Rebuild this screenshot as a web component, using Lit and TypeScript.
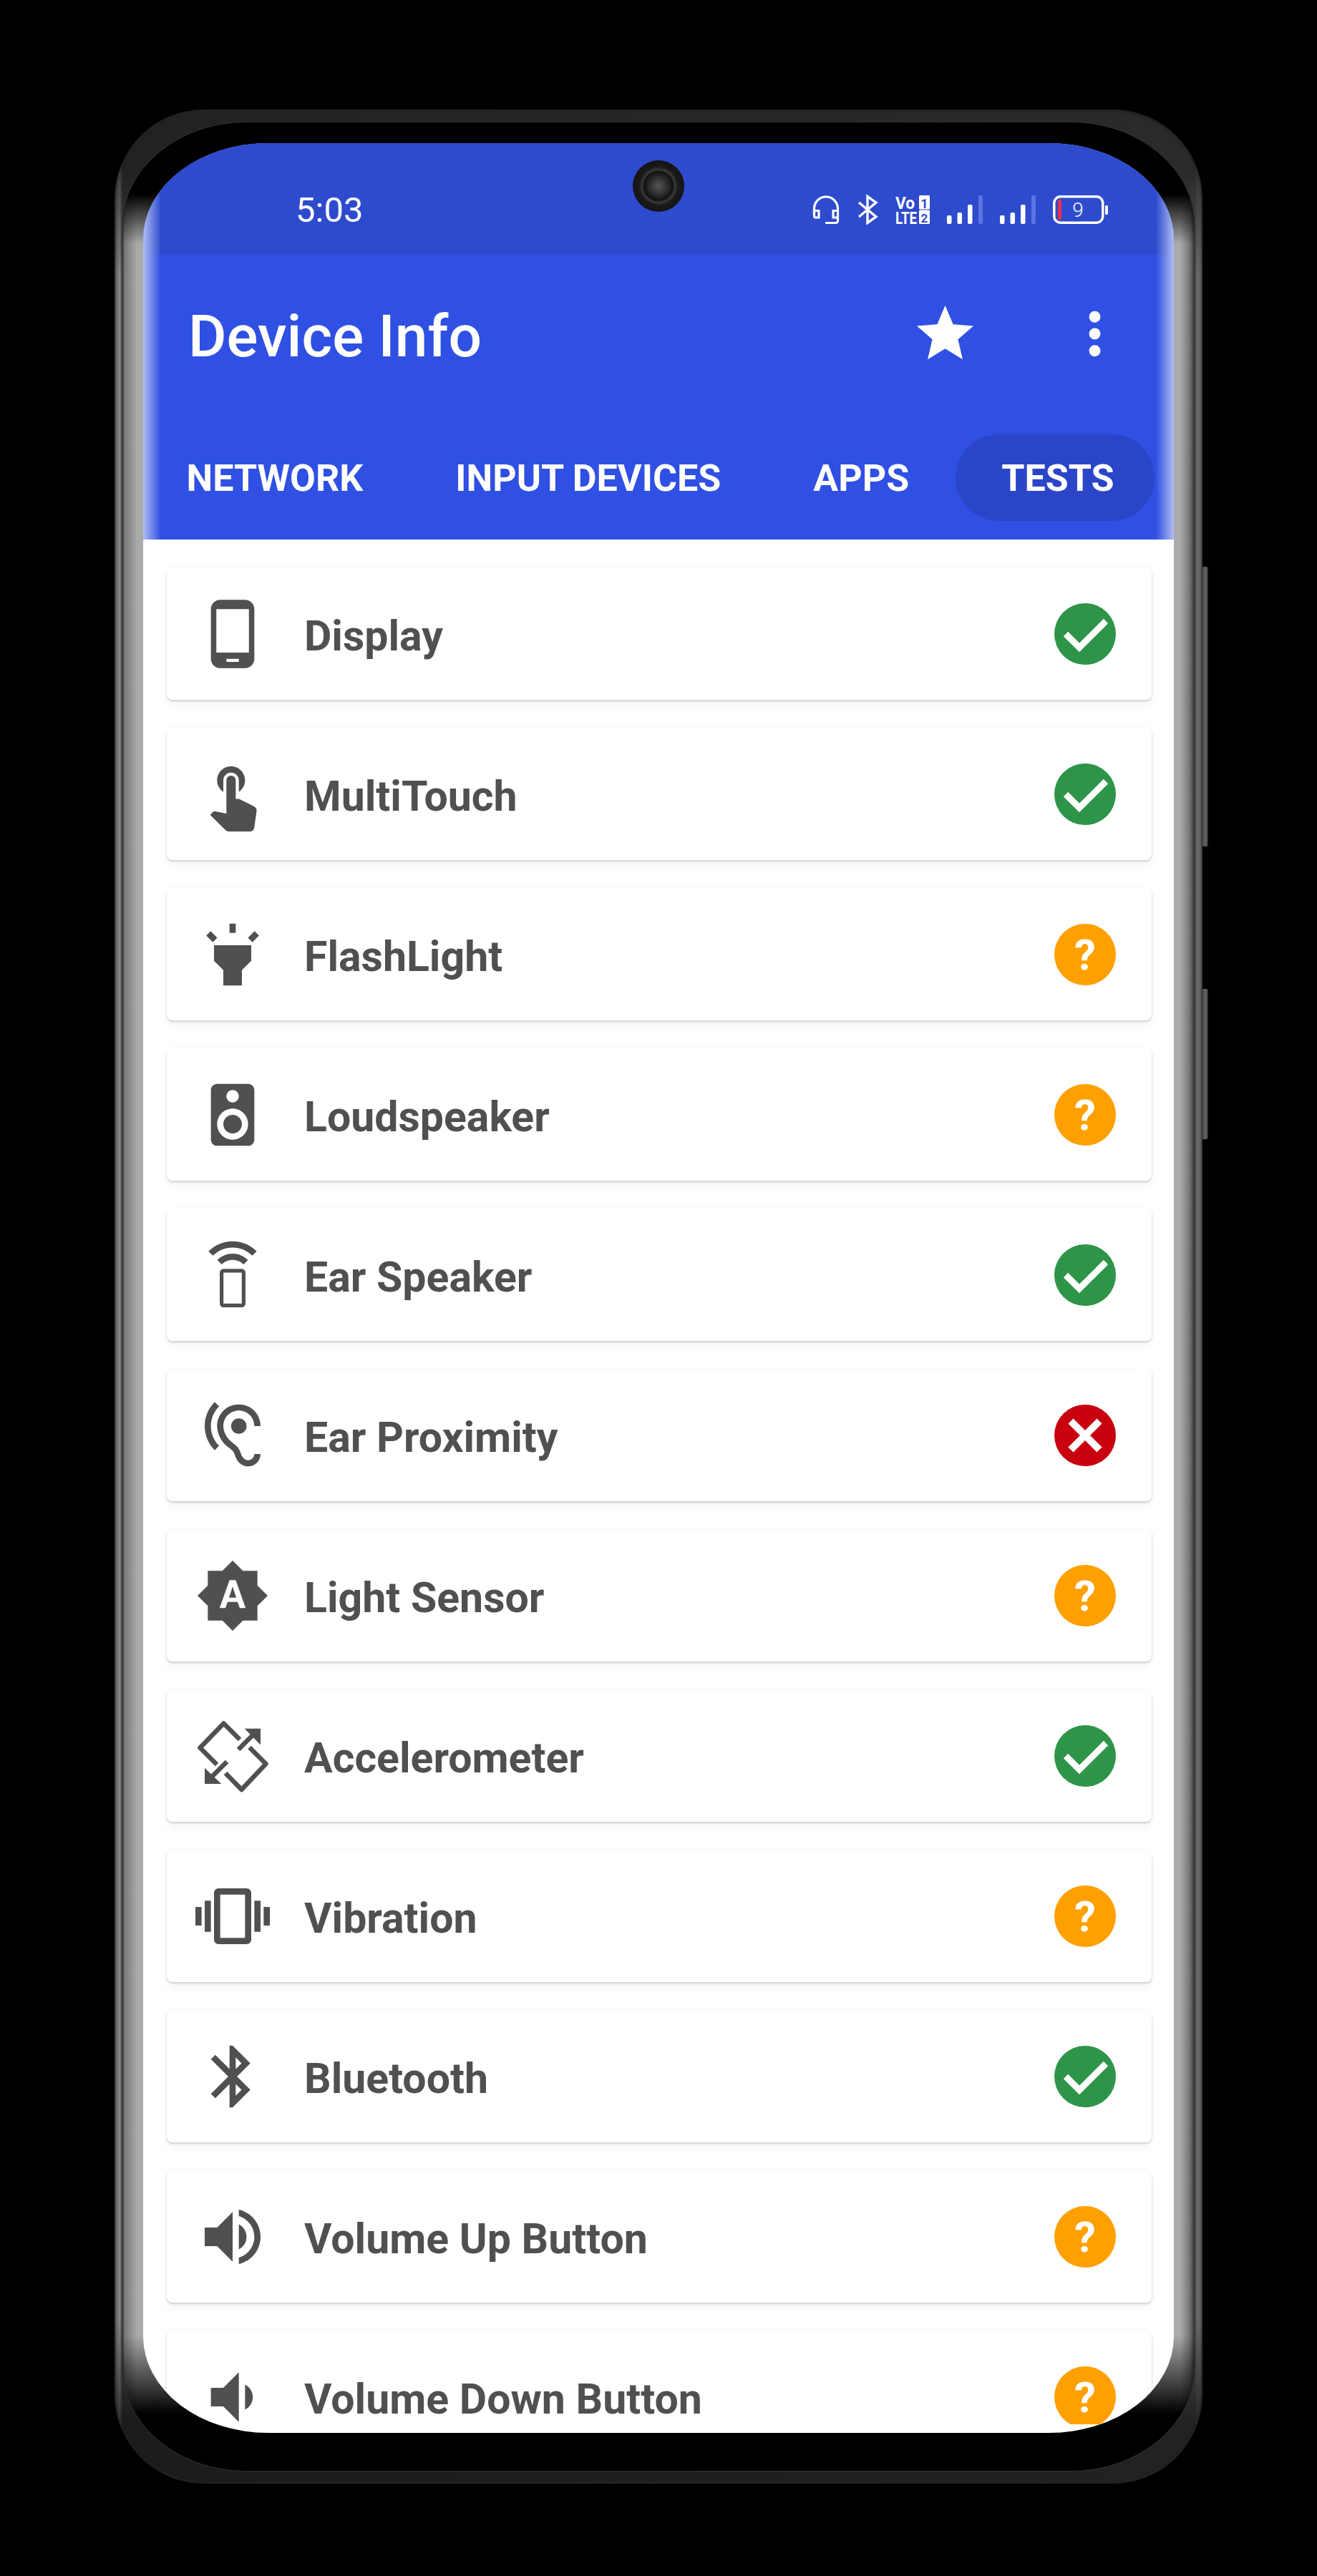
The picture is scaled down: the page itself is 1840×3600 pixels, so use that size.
import { LitElement, css, html, svg } from 'lit';
import { customElement } from 'lit/decorators.js';

type Status = 'ok' | 'fail' | 'unknown';

interface TestRow {
  label: string;
  icon: unknown;
  status: Status;
}

const ICONS = {
  display: svg`<path d="M16 1H8C6.34 1 5 2.34 5 4v16c0 1.66 1.34 3 3 3h8c1.66 0 3-1.34 3-3V4c0-1.66-1.34-3-3-3zm-2 20h-4v-1h4v1zm3.25-3H6.75V4h10.5v14z"/>`,
  touch: svg`<path d="M9 11.24V7.5C9 6.12 10.12 5 11.5 5S14 6.12 14 7.5v3.74c1.21-.81 2-2.18 2-3.74C16 5.01 13.99 3 11.5 3S7 5.01 7 7.5c0 1.56.79 2.93 2 3.74zm9.84 4.63l-4.54-2.26c-.17-.07-.35-.11-.54-.11H13v-6c0-.83-.67-1.5-1.5-1.5S10 6.67 10 7.5v10.74l-3.43-.72c-.08-.01-.15-.03-.24-.03-.31 0-.59.13-.79.33l-.79.8 4.94 4.94c.27.27.65.44 1.06.44h6.79c.75 0 1.33-.55 1.44-1.28l.75-5.27c.01-.07.02-.14.02-.2 0-.62-.38-1.16-.91-1.38z"/>`,
  flash: svg`<path d="M6 14l3 3v5h6v-5l3-3V9H6zm5-12h2v3h-2zM3.5 5.875L4.914 4.46l2.12 2.122L5.62 7.997zm13.46.71l2.123-2.12 1.414 1.414L18.375 8z"/>`,
  speaker: svg`<path d="M17 2H7c-1.1 0-2 .9-2 2v16c0 1.1.89 1.99 2 1.99L17 22c1.1 0 2-.9 2-2V4c0-1.1-.9-2-2-2zm-5 2c1.1 0 2 .9 2 2s-.9 2-2 2c-1.11 0-2-.9-2-2s.89-2 2-2zm0 16c-2.76 0-5-2.24-5-5s2.24-5 5-5 5 2.24 5 5-2.24 5-5 5zm0-8c-1.66 0-3 1.34-3 3s1.34 3 3 3 3-1.34 3-3-1.34-3-3-3z"/>`,
  earSpeaker: svg`<g transform="translate(0 1.1)"><path d="M7.05 6.05l1.41 1.41C9.37 6.56 10.62 6 12 6s2.63.56 3.54 1.46l1.41-1.41C15.68 4.78 13.93 4 12 4s-3.68.78-4.95 2.05zM12 0C8.96 0 6.21 1.23 4.22 3.22l1.41 1.41C7.26 3.01 9.51 2 12 2s4.74 1.01 6.36 2.64l1.41-1.41C17.79 1.23 15.04 0 12 0z"/></g>
    <rect x="8.45" y="10.6" width="7.1" height="11.2" rx="0.6" fill="none" stroke="#505050" stroke-width="1.2"/>`,
  hearing: svg`<path d="M17 20c-.29 0-.56-.06-.76-.15-.71-.37-1.21-.88-1.71-2.38-.51-1.56-1.47-2.29-2.39-3-.79-.61-1.61-1.24-2.32-2.53C9.29 10.98 9 9.93 9 9c0-2.8 2.2-5 5-5s5 2.2 5 5h2c0-3.93-3.07-7-7-7S7 5.07 7 9c0 1.26.38 2.65 1.07 3.9.91 1.65 1.98 2.48 2.85 3.15.81.62 1.39 1.07 1.71 2.05.6 1.82 1.37 2.84 2.73 3.55.51.23 1.07.35 1.64.35 2.21 0 4-1.79 4-4h-2c0 1.1-.9 2-2 2zM7.64 2.64L6.22 1.22C4.23 3.21 3 5.96 3 9s1.23 5.79 3.22 7.78l1.41-1.41C6.01 13.74 5 11.49 5 9s1.01-4.74 2.64-6.36zM11.5 9c0 1.38 1.12 2.5 2.5 2.5s2.5-1.12 2.5-2.5-1.12-2.5-2.5-2.5-2.5 1.12-2.5 2.5z"/>`,
  brightness: svg`<path d="M10.85 12.65h2.3L12 9l-1.15 3.65zM20 8.69V4h-4.69L12 .69 8.69 4H4v4.69L.69 12 4 15.31V20h4.69L12 23.31 15.31 20H20v-4.69L23.31 12 20 8.69zM14.3 16l-.7-2h-3.2l-.7 2H7.8L11 7h2l3.2 9h-1.9z"/>`,
  rotate: svg`<g transform="scale(.2308) translate(-8 -8)">
      <path d="M70 37L47.5 14.5L14.5 48.5L38 72M83.5 48L106.5 71L72.5 107L50 84M68 51L90 29M52 68L30 90" fill="none" stroke="#505050" stroke-width="6.5" stroke-linejoin="round"/>
      <path d="M76.7 21.8H99V44.5zM21 76.7V99H44.3z"/>
    </g>`,
  vibration: svg`<path d="M0 15h2V9H0v6zm3 2h2V7H3v10zm19-8v6h2V9h-2zm-3 8h2V7h-2v10zM16.5 3h-9C6.67 3 6 3.67 6 4.5v15c0 .83.67 1.5 1.5 1.5h9c.83 0 1.5-.67 1.5-1.5v-15c0-.83-.67-1.5-1.5-1.5zM16 19H8V5h8v14z"/>`,
  bluetooth: svg`<path d="M17.71 7.71L12 2h-1v7.59L6.41 5 5 6.41 10.59 12 5 17.59 6.41 19 11 14.41V22h1l5.71-5.71-4.3-4.29 4.3-4.29zM13 5.83l1.88 1.88L13 9.59V5.83zm1.88 10.46L13 18.17v-3.76l1.88 1.88z"/>`,
  volumeUp: svg`<path d="M3 9v6h4l5 5V4L7 9H3zm13.5 3c0-1.77-1.02-3.29-2.5-4.03v8.05c1.48-.73 2.5-2.25 2.5-4.02zM14 3.23v2.06c2.89.86 5 3.54 5 6.71s-2.11 5.85-5 6.71v2.06c4.01-.91 7-4.49 7-8.77s-2.99-7.86-7-8.77z"/>`,
  volumeDown: svg`<path d="M18.5 12c0-1.77-1.02-3.29-2.5-4.03v8.05c1.48-.73 2.5-2.25 2.5-4.02zM5 9v6h4l5 5V4L9 9H5z"/>`,
};

const ROWS: TestRow[] = [
  { label: 'Display', icon: ICONS.display, status: 'ok' },
  { label: 'MultiTouch', icon: ICONS.touch, status: 'ok' },
  { label: 'FlashLight', icon: ICONS.flash, status: 'unknown' },
  { label: 'Loudspeaker', icon: ICONS.speaker, status: 'unknown' },
  { label: 'Ear Speaker', icon: ICONS.earSpeaker, status: 'ok' },
  { label: 'Ear Proximity', icon: ICONS.hearing, status: 'fail' },
  { label: 'Light Sensor', icon: ICONS.brightness, status: 'unknown' },
  { label: 'Accelerometer', icon: ICONS.rotate, status: 'ok' },
  { label: 'Vibration', icon: ICONS.vibration, status: 'unknown' },
  { label: 'Bluetooth', icon: ICONS.bluetooth, status: 'ok' },
  { label: 'Volume Up Button', icon: ICONS.volumeUp, status: 'unknown' },
  { label: 'Volume Down Button', icon: ICONS.volumeDown, status: 'unknown' },
];

const TABS = ['NETWORK', 'INPUT DEVICES', 'APPS', 'TESTS'];

@customElement('app-root')
export class AppRoot extends LitElement {
  static styles = css`
    :host {
      display: block;
      width: 1840px;
      height: 3600px;
      overflow: hidden;
      background: #000;
      font-family: Roboto, 'Liberation Sans', sans-serif;
    }
    .device {
      display: flex;
      padding: 153px 0 0 160px;
    }
    .frame {
      width: 1520px;
      height: 3318px;
      box-sizing: border-box;
      padding: 18px 11px;
      border-radius: 125px;
      background:
        linear-gradient(180deg, rgba(0, 0, 0, 0.5) 0, rgba(0, 0, 0, 0.5) 90px, transparent 230px, transparent calc(100% - 230px), rgba(0, 0, 0, 0.6) calc(100% - 90px)),
        linear-gradient(90deg, #555 0, #888 7px, #444 11px, #555 calc(100% - 11px), #6a6a6a calc(100% - 6px), #555 100%);
      box-shadow: inset 0 3px 3px #222, inset 0 -3px 3px #222;
    }
    .bezel {
      height: 100%;
      box-sizing: border-box;
      padding: 29px 29px 53px;
      border-radius: 173px / 145px;
      box-shadow: 0 0 0 1px #333;
      background:
        linear-gradient(180deg, #000 0, #000 100px, transparent 170px, transparent calc(100% - 190px), #000 calc(100% - 80px)),
        linear-gradient(90deg, #333 0, #777 3px, #aaa 20px, #aaa calc(100% - 20px), #777 calc(100% - 7px), #333 100%);
    }
    .screen {
      position: relative;
      height: 3200px;
      overflow: hidden;
      background: #fff;
      border-radius: 175px / 135px;
    }
    .side-keys {
      display: flex;
      flex-direction: column;
      gap: 199px;
      padding-top: 639px;
    }
    .key {
      width: 8px;
      border-radius: 0 3px 3px 0;
      background: linear-gradient(90deg, #444, #6a6a6a 60%, #222);
    }
    .key.long {
      height: 391px;
    }
    .key.short {
      height: 210px;
    }
    .header {
      background:
        linear-gradient(90deg, #b0bdf3 0, rgba(176, 189, 243, 0) 25px, rgba(176, 189, 243, 0) calc(100% - 25px), #b0bdf3 100%),
        #2f50e2;
      color: #fff;
    }
    .status-bar {
      display: flex;
      align-items: center;
      height: 156px;
      padding: 30px 91px 0 213px;
      box-sizing: border-box;
      background:
        linear-gradient(90deg, #b0bdf3 0, rgba(176, 189, 243, 0) 25px, rgba(176, 189, 243, 0) calc(100% - 25px), #b0bdf3 100%),
        #2e4bce;
    }
    .time {
      font-size: 49px;
      font-weight: 400;
      line-height: 1;
    }
    .camera {
      position: absolute;
      top: 24px;
      left: 50%;
      width: 72px;
      height: 72px;
      margin-left: -36px;
      border-radius: 50%;
      background: radial-gradient(circle at 50% 50%, #555 0, #222 16px, #111 20px, #3a3a3a 23px, #1a1a1a 27px, #0a0a0a 100%);
    }
    .status-icons {
      display: flex;
      align-items: center;
      gap: 24px;
      margin-left: auto;
    }
    .status-icons svg {
      display: block;
      height: 40px;
      overflow: visible;
    }
    .toolbar {
      display: flex;
      align-items: center;
      gap: 114px;
      height: 224px;
      padding: 0 63px 0 63px;
      box-sizing: border-box;
    }
    .title {
      flex: 1;
      padding-top: 3px;
      font-size: 82px;
      font-weight: 500;
      line-height: 1;
    }
    .toolbar svg {
      display: block;
      width: 95px;
      height: 95px;
      fill: #fff;
      margin-bottom: 4px;
    }
    .tabs {
      display: flex;
      align-items: center;
      height: 174px;
      margin-left: -4px;
    }
    .tab {
      display: flex;
      align-items: center;
      height: 121px;
      padding: 2px 64.5px 0;
      box-sizing: border-box;
      font-size: 52px;
      font-weight: 700;
      border-radius: 60px;
      white-space: nowrap;
    }
    .tab.active {
      padding-right: 56px;
      background: #2b45c9;
    }
    .list {
      display: flex;
      flex-direction: column;
      gap: 39px;
      height: 2634px;
      box-sizing: border-box;
      overflow: hidden;
      padding: 39px 31px 0 33px;
    }
    .card {
      display: flex;
      flex: none;
      align-items: center;
      height: 185px;
      padding: 0 50px 0 40px;
      box-sizing: border-box;
      border-radius: 8px;
      background: #fff;
      box-shadow: 0 2px 3px rgba(0, 0, 0, 0.16), 0 8px 14px rgba(0, 0, 0, 0.04), 0 -1px 5px rgba(0, 0, 0, 0.03);
    }
    .icon {
      display: block;
      flex: none;
      width: 104px;
      height: 104px;
      fill: #505050;
    }
    .label {
      flex: 1;
      padding: 8px 0 0 48px;
      font-size: 59px;
      font-weight: 700;
      line-height: 1.2;
      color: #505050;
    }
    .badge {
      display: block;
      flex: none;
      width: 86px;
      height: 86px;
    }
    .badge text {
      font-family: Roboto, 'Liberation Sans', sans-serif;
      font-size: 60px;
      font-weight: 700;
      fill: #fff;
    }
  `;

  private _signal() {
    return html`<svg width="50" viewBox="0 0 50 40">
      <rect x="0" y="28" width="6.5" height="12" rx="2" fill="#fff" />
      <rect x="14.5" y="24" width="6.5" height="16" rx="2" fill="#fff" />
      <rect x="29" y="13" width="6.5" height="27" rx="2" fill="#fff" />
      <rect x="44" y="0" width="6" height="40" rx="2" fill="#5a74e0" />
    </svg>`;
  }

  private _statusIcons() {
    return html`<div class="status-icons">
      <svg width="38" viewBox="0 0 38 40" fill="none" stroke="#fff" stroke-width="3.2">
        <path d="M2.5 27V19A16.5 17 0 0 1 35.5 19V35A3 3 0 0 1 32.5 38.5H18" />
        <path d="M2.5 21.5H9V31H4.5A2 2 0 0 1 2.5 29zM35.5 21.5H29V31H35.5" />
      </svg>
      <svg width="30" viewBox="0 0 30 40" fill="none" stroke="#fff" stroke-width="3.4">
        <path d="M3 10L27 30L15 38.5V1.5L27 10L3 30" />
      </svg>
      <svg width="48" viewBox="0 0 48 40" font-family="Roboto, sans-serif" font-weight="700" font-size="24">
        <text fill="#fff">
          <tspan x="0" y="19" textLength="27" lengthAdjust="spacingAndGlyphs">Vo</tspan>
          <tspan x="0" y="39.5" textLength="30" lengthAdjust="spacingAndGlyphs">LTE</tspan>
        </text>
        <rect x="33" y="0" width="15" height="19.5" rx="1.5" fill="#fff" />
        <rect x="33" y="20.5" width="15" height="19.5" rx="1.5" fill="#fff" />
        <text x="40.5" y="17.5" font-size="18" text-anchor="middle" fill="#2e4bce">1</text>
        <text x="40.5" y="37.5" font-size="17" text-anchor="middle" fill="#2e4bce">2</text>
      </svg>
      ${this._signal()} ${this._signal()}
      <svg width="78" viewBox="0 0 78 40">
        <rect x="1.75" y="1.75" width="68" height="36.5" rx="9" fill="none" stroke="#fff" stroke-width="3.5" />
        <rect x="7" y="6" width="5" height="28" fill="#e8304a" />
        <rect x="73" y="14" width="4" height="13" rx="1.5" fill="#fff" />
        <text x="35" y="30" font-family="Roboto, sans-serif" font-size="28" font-weight="300" text-anchor="middle" fill="#fff">9</text>
      </svg>
    </div>`;
  }

  private _badge(status: Status) {
    if (status === 'ok') {
      return html`<svg class="badge" viewBox="0 0 86 86">
        <circle cx="43" cy="43" r="43" fill="#2e9448" />
        <path d="M16 43L35 62L72 25" fill="none" stroke="#fff" stroke-width="9" />
      </svg>`;
    }
    if (status === 'fail') {
      return html`<svg class="badge" viewBox="0 0 86 86">
        <circle cx="43" cy="43" r="43" fill="#c8000f" />
        <path d="M23 23L63 63M63 23L23 63" fill="none" stroke="#fff" stroke-width="10" />
      </svg>`;
    }
    return html`<svg class="badge" viewBox="0 0 86 86">
      <circle cx="43" cy="43" r="43" fill="#ffa000" />
      <text x="43" y="64" text-anchor="middle">?</text>
    </svg>`;
  }

  private _card(row: TestRow) {
    return html`<div class="card">
      <svg class="icon" viewBox="0 0 24 24">${row.icon}</svg>
      <div class="label">${row.label}</div>
      ${this._badge(row.status)}
    </div>`;
  }

  render() {
    return html`<div class="device">
      <div class="frame">
        <div class="bezel">
          <div class="screen">
            <div class="camera"></div>
            <div class="header">
              <div class="status-bar">
                <div class="time">5:03</div>
                ${this._statusIcons()}
              </div>
              <div class="toolbar">
                <div class="title">Device Info</div>
                <svg viewBox="0 0 24 24"><path d="M12 17.27L18.18 21l-1.64-7.03L22 9.24l-7.19-.61L12 2 9.19 8.63 2 9.24l5.46 4.73L5.82 21z" /></svg>
                <svg viewBox="0 0 24 24"><path d="M12 8c1.1 0 2-.9 2-2s-.9-2-2-2-2 .9-2 2 .9 2 2 2zm0 2c-1.1 0-2 .9-2 2s.9 2 2 2 2-.9 2-2-.9-2-2-2zm0 6c-1.1 0-2 .9-2 2s.9 2 2 2 2-.9 2-2-.9-2-2-2z" /></svg>
              </div>
              <div class="tabs">
                ${TABS.map((t) => html`<div class="tab ${t === 'TESTS' ? 'active' : ''}">${t}</div>`)}
              </div>
            </div>
            <div class="list">${ROWS.map((r) => this._card(r))}</div>
          </div>
        </div>
      </div>
      <div class="side-keys">
        <div class="key long"></div>
        <div class="key short"></div>
      </div>
    </div>`;
  }
}

declare global {
  interface HTMLElementTagNameMap {
    'app-root': AppRoot;
  }
}
